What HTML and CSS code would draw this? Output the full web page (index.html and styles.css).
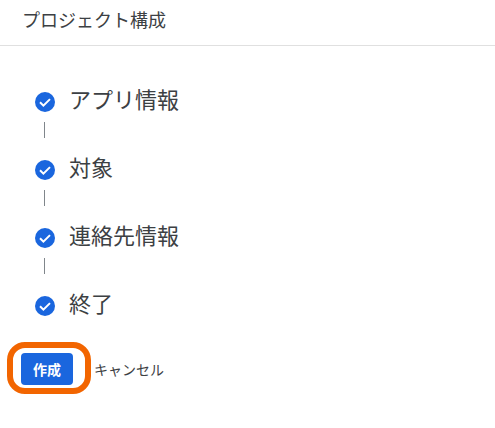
FILE: index.html
```html
<!DOCTYPE html>
<html lang="ja">

<head>
    <meta charset="UTF-8">
    <meta name="viewport" content="width=device-width, initial-scale=1.0">
    <title>プロジェクト構成</title>
    <link rel="stylesheet" href="styles.css">
</head>

<body>
    <header class="page-header">プロジェクト構成</header>

    <ul class="steps">
        <li class="step">
            <svg class="step-icon" viewBox="0 0 20 20"><circle cx="10" cy="10" r="10" fill="#1a66de"/><path d="M5 10.3l3.4 3.4 6.6-6.6" fill="none" stroke="#fff" stroke-width="2"/></svg>
            <span class="step-label">アプリ情報</span>
        </li>
        <li class="step-line"></li>
        <li class="step">
            <svg class="step-icon" viewBox="0 0 20 20"><circle cx="10" cy="10" r="10" fill="#1a66de"/><path d="M5 10.3l3.4 3.4 6.6-6.6" fill="none" stroke="#fff" stroke-width="2"/></svg>
            <span class="step-label">対象</span>
        </li>
        <li class="step-line"></li>
        <li class="step">
            <svg class="step-icon" viewBox="0 0 20 20"><circle cx="10" cy="10" r="10" fill="#1a66de"/><path d="M5 10.3l3.4 3.4 6.6-6.6" fill="none" stroke="#fff" stroke-width="2"/></svg>
            <span class="step-label">連絡先情報</span>
        </li>
        <li class="step-line"></li>
        <li class="step">
            <svg class="step-icon" viewBox="0 0 20 20"><circle cx="10" cy="10" r="10" fill="#1a66de"/><path d="M5 10.3l3.4 3.4 6.6-6.6" fill="none" stroke="#fff" stroke-width="2"/></svg>
            <span class="step-label">終了</span>
        </li>
    </ul>

    <div class="actions">
        <div class="highlight">
            <button class="create-btn">作成</button>
        </div>
        <button class="cancel-btn">キャンセル</button>
    </div>
</body>

</html>
```

FILE: styles.css
```css
* {
    box-sizing: border-box;
}

body {
    margin: 0;
    background-color: white;
    font-family: Roboto, "Noto Sans CJK JP", sans-serif;
    color: #3c4043;
}

.page-header {
    height: 46px;
    padding: 10px 0 0 22px;
    font-size: 18px;
    line-height: 22px;
    border-bottom: 1px solid #e0e0e0;
}

.steps {
    list-style: none;
    margin: 0;
    padding: 41px 0 0 35px;
}

.step {
    display: flex;
    align-items: center;
    height: 30px;
}

.step-icon {
    width: 20px;
    height: 20px;
}

.step-label {
    margin-left: 14px;
    margin-top: -2px;
    font-size: 22px;
    line-height: 30px;
}

.step-line {
    width: 1px;
    height: 16px;
    margin: 5px 0 17px 9px;
    background-color: #80868b;
}

.actions {
    display: flex;
    align-items: center;
    margin: 21px 0 0 7px;
}

.highlight {
    display: flex;
    width: 84px;
    height: 52px;
    padding: 5px 8px 3px;
    border: 6px solid #f26500;
    border-radius: 18px;
}

.create-btn {
    width: 52px;
    height: 32px;
    border: none;
    border-radius: 4px;
    background-color: #1a66de;
    color: white;
    font-family: inherit;
    font-size: 14px;
    font-weight: 700;
}

.cancel-btn {
    margin: 1px 0 0 3px;
    padding: 0;
    border: none;
    background: none;
    color: #3c4043;
    font-family: inherit;
    font-size: 14px;
    font-weight: 400;
}
```
